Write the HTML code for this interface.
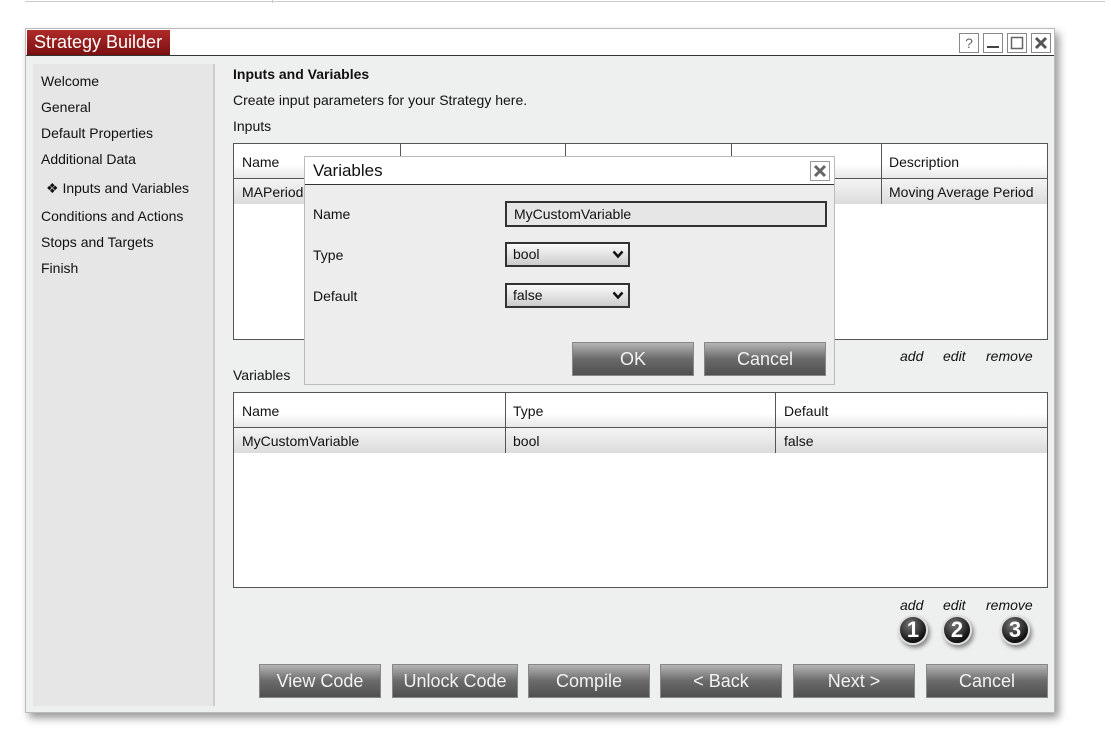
<!DOCTYPE html>
<html><head><style>
*{box-sizing:border-box;margin:0;padding:0}
body{width:1111px;height:753px;background:#fff;font-family:"Liberation Sans",Arial,sans-serif;font-size:14px;color:#111;position:relative;overflow:hidden}
.a{position:absolute}
.btn{position:absolute;height:34px;background:linear-gradient(#b5b5b5,#6a6a6a 50%,#505050);border:1px solid #888;color:#f2f2f2;font-size:18px;text-align:center;line-height:32px}
.tbl{position:absolute;background:#fff;border:1px solid #555}
.hdr{position:absolute;left:0;right:0;top:0;height:35px;background:linear-gradient(#fff,#fff 60%,#e8e8e8);border-bottom:1px solid #555}
.row{position:absolute;left:0;right:0;height:25px;background:linear-gradient(#f4f4f4,#dcdcdc)}
.vl{position:absolute;top:0;width:1px;background:#555}
.t{position:absolute;font-size:14px}
.wb{position:absolute;top:33px;width:20px;height:20px;border:1px solid #888;background:#fff}
.sel{position:absolute;left:505px;width:125px;height:25px;border:2px solid #333;background:linear-gradient(#fafafa,#ccc);padding-left:6px;line-height:21px}
.sel svg{position:absolute;right:4px;top:6px}
.circ{position:absolute;width:30px;height:30px;border-radius:50%;background:radial-gradient(circle at 40% 30%,#777,#111 70%);border:2px solid #ddd;box-shadow:2px 3px 4px #888;color:#fff;font-weight:bold;font-size:22px;text-align:center;line-height:26px}
</style></head><body>
<div class="a" style="left:25px;top:0;width:1080px;height:2px;border-bottom:1px solid #ccc"></div>
<div class="a" style="left:272px;top:0;width:1px;height:3px;background:#ccc"></div>
<div class="a" style="left:25px;top:28px;width:1030px;height:685px;background:#eef0f0;border:1px solid #bbb;box-shadow:4px 5px 8px #999"></div>
<div class="a" style="left:26px;top:29px;width:1028px;height:27px;background:#fff;border-bottom:1px solid #333"></div>
<div class="a" style="left:27px;top:30px;width:143px;height:25px;background:linear-gradient(#b02a2a,#7a1010);color:#fff;font-size:18px;padding-left:7px;line-height:24px">Strategy Builder</div>
<div class="wb" style="left:959px;color:#666;text-align:center;font-size:14px;line-height:18px">?</div>
<div class="wb" style="left:983px"><svg width="18" height="18"><rect x="3" y="12" width="12" height="2" fill="#444"/></svg></div>
<div class="wb" style="left:1007px"><svg width="18" height="18"><rect x="3.5" y="3.5" width="11" height="11" fill="none" stroke="#666" stroke-width="1.5"/></svg></div>
<div class="wb" style="left:1031px"><svg width="18" height="18"><path d="M4 4L14 14M14 4L4 14" stroke="#555" stroke-width="3"/></svg></div>
<div class="a" style="left:33px;top:64px;width:182px;height:642px;background:#e6e6e6;border-right:2px solid #ccc"></div>
<div class="t" style="left:41px;top:73px">Welcome</div>
<div class="t" style="left:41px;top:99px">General</div>
<div class="t" style="left:41px;top:125px">Default Properties</div>
<div class="t" style="left:41px;top:151px">Additional Data</div>
<div class="t" style="left:46px;top:180px">❖ Inputs and Variables</div>
<div class="t" style="left:41px;top:208px">Conditions and Actions</div>
<div class="t" style="left:41px;top:234px">Stops and Targets</div>
<div class="t" style="left:41px;top:260px">Finish</div>
<div class="t" style="left:233px;top:66px;font-weight:bold">Inputs and Variables</div>
<div class="t" style="left:233px;top:92px">Create input parameters for your Strategy here.</div>
<div class="t" style="left:233px;top:118px">Inputs</div>
<div class="tbl" style="left:233px;top:143px;width:815px;height:197px">
<div class="hdr"></div><div class="row" style="top:35px"></div>
<div class="vl" style="left:166px;height:60px"></div><div class="vl" style="left:331px;height:35px"></div><div class="vl" style="left:497px;height:35px"></div><div class="vl" style="left:647px;height:60px"></div>
<div class="t" style="left:8px;top:10px">Name</div><div class="t" style="left:655px;top:10px">Description</div>
<div class="t" style="left:8px;top:40px">MAPeriod</div><div class="t" style="left:655px;top:40px">Moving Average Period</div>
</div>
<div class="t" style="left:900px;top:348px;font-style:italic">add</div><div class="t" style="left:943px;top:348px;font-style:italic">edit</div><div class="t" style="left:986px;top:348px;font-style:italic">remove</div>
<div class="t" style="left:233px;top:367px">Variables</div>
<div class="tbl" style="left:233px;top:392px;width:815px;height:196px">
<div class="hdr"></div><div class="row" style="top:35px"></div>
<div class="vl" style="left:271px;height:60px"></div><div class="vl" style="left:541px;height:60px"></div>
<div class="t" style="left:8px;top:10px">Name</div><div class="t" style="left:279px;top:10px">Type</div><div class="t" style="left:550px;top:10px">Default</div>
<div class="t" style="left:8px;top:40px">MyCustomVariable</div><div class="t" style="left:279px;top:40px">bool</div><div class="t" style="left:550px;top:40px">false</div>
</div>
<div class="t" style="left:900px;top:597px;font-style:italic">add</div><div class="t" style="left:943px;top:597px;font-style:italic">edit</div><div class="t" style="left:986px;top:597px;font-style:italic">remove</div>
<div class="circ" style="left:898px;top:615px">1</div><div class="circ" style="left:942px;top:615px">2</div><div class="circ" style="left:1000px;top:615px">3</div>
<div class="btn" style="left:259px;top:664px;width:122px">View Code</div>
<div class="btn" style="left:392px;top:664px;width:126px">Unlock Code</div>
<div class="btn" style="left:528px;top:664px;width:122px">Compile</div>
<div class="btn" style="left:660px;top:664px;width:122px">&lt; Back</div>
<div class="btn" style="left:793px;top:664px;width:122px">Next &gt;</div>
<div class="btn" style="left:926px;top:664px;width:122px">Cancel</div>
<div class="a" style="left:304px;top:156px;width:531px;height:229px;background:#ededed;border:1px solid #bbb"></div>
<div class="a" style="left:305px;top:157px;width:529px;height:28px;background:#fff;border-bottom:1px solid #333"></div>
<div class="t" style="left:313px;top:161px;font-size:17px">Variables</div>
<div class="a" style="left:810px;top:161px;width:20px;height:20px;border:1px solid #999;background:#fff"><svg width="18" height="18"><path d="M4 4L14 14M14 4L4 14" stroke="#666" stroke-width="3"/></svg></div>
<div class="t" style="left:313px;top:206px">Name</div>
<div class="a" style="left:505px;top:201px;width:322px;height:26px;border:2px solid #333;background:#e6e6e6;padding-left:7px;line-height:22px">MyCustomVariable</div>
<div class="t" style="left:313px;top:247px">Type</div>
<div class="sel" style="top:242px">bool<svg width="12" height="9"><path d="M1.5 1.5L6 6.5L10.5 1.5" fill="none" stroke="#111" stroke-width="2.5"/></svg></div>
<div class="t" style="left:313px;top:288px">Default</div>
<div class="sel" style="top:283px">false<svg width="12" height="9"><path d="M1.5 1.5L6 6.5L10.5 1.5" fill="none" stroke="#111" stroke-width="2.5"/></svg></div>
<div class="btn" style="left:572px;top:342px;width:122px">OK</div>
<div class="btn" style="left:704px;top:342px;width:122px">Cancel</div>
</body></html>
